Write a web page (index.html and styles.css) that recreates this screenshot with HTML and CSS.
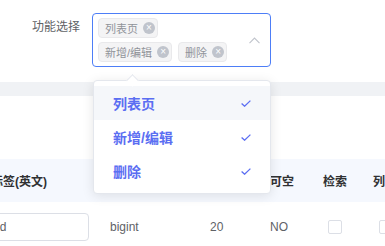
FILE: index.html
```html
<!DOCTYPE html>
<html lang="zh">
<head>
<meta charset="utf-8">
<link rel="stylesheet" href="styles.css">
</head>
<body>
<div class="page">
  <div class="form-row">
    <label class="form-label">功能选择</label>
    <div class="select is-focus">
      <div class="tags">
        <span class="tag"><span class="tag-text">列表页</span><i class="tag-close">×</i></span>
        <span class="tag"><span class="tag-text">新增/编辑</span><i class="tag-close">×</i></span>
        <span class="tag"><span class="tag-text">删除</span><i class="tag-close">×</i></span>
      </div>
      <svg class="arrow" width="11" height="7" viewBox="0 0 11 7"><polyline points="0.5,6.2 5.5,1 10.5,6.2" fill="none" stroke="#c0c4cc" stroke-width="1.1"/></svg>
    </div>
  </div>
  <div class="band"></div>
  <div class="table">
    <div class="thead">
      <div class="th th-first">标签(英文)</div>
      <div class="th">类型</div>
      <div class="th">长度</div>
      <div class="th">可空</div>
      <div class="th">检索</div>
      <div class="th">列表</div>
    </div>
    <div class="trow">
      <div class="td"><div class="input">id</div></div>
      <div class="td">bigint</div>
      <div class="td">20</div>
      <div class="td">NO</div>
      <div class="td"><span class="checkbox cb5"></span></div>
      <div class="td"><span class="checkbox cb6"></span></div>
    </div>
  </div>

  <div class="dropdown">
    <span class="dropdown-arrow"></span>
    <ul class="options">
      <li class="option hover"><span>列表页</span><svg class="check" width="10" height="7" viewBox="0 0 10 7"><polyline points="0.6,3.4 3.6,6.2 9.4,0.6" fill="none" stroke="#5b6ef2" stroke-width="1.3"/></svg></li>
      <li class="option"><span>新增/编辑</span><svg class="check" width="10" height="7" viewBox="0 0 10 7"><polyline points="0.6,3.4 3.6,6.2 9.4,0.6" fill="none" stroke="#5b6ef2" stroke-width="1.3"/></svg></li>
      <li class="option"><span>删除</span><svg class="check" width="10" height="7" viewBox="0 0 10 7"><polyline points="0.6,3.4 3.6,6.2 9.4,0.6" fill="none" stroke="#5b6ef2" stroke-width="1.3"/></svg></li>
    </ul>
  </div>
</div>
</body>
</html>
```

FILE: styles.css
```css
html, body {
  margin: 0;
  padding: 0;
  overflow: hidden;
  background: #fff;
}
body {
  font-family: "Liberation Sans", "Noto Sans CJK SC", sans-serif;
  font-size: 12px;
  color: #606266;
}
.page {
  position: relative;
  width: 385px;
  height: 246px;
}
.form-row {
  display: flex;
  padding-top: 13px;
}
.form-label {
  width: 92px;
  box-sizing: border-box;
  padding-right: 12px;
  text-align: right;
  line-height: 28px;
  font-size: 12px;
  color: #606266;
}
.select {
  width: 179px;
  height: 54px;
  box-sizing: border-box;
  border: 1px solid #4d7ef7;
  border-radius: 4px;
  padding: 4px 10px 4px 5px;
  display: flex;
  align-items: center;
}
.tags {
  flex: 1;
  display: flex;
  flex-wrap: wrap;
  column-gap: 6px;
  row-gap: 4px;
  align-content: flex-start;
  height: 100%;
}
.tag {
  display: inline-flex;
  align-items: center;
  height: 20px;
  box-sizing: border-box;
  padding: 0 2px 0 6px;
  background: #f4f4f5;
  border: 1px solid #e9e9eb;
  border-radius: 4px;
  color: #909399;
  font-size: 11px;
}
.tag-close {
  display: inline-flex;
  align-items: center;
  justify-content: center;
  width: 12px;
  height: 12px;
  margin-left: 5px;
  border-radius: 50%;
  background: #c0c4cc;
  color: #fff;
  font-style: normal;
  font-size: 10px;
  line-height: 1;
}
.arrow {
  margin-left: 14px;
  display: block;
}
.band {
  margin-top: 15px;
  height: 14px;
  background: #f0f2f5;
}
.table {
  margin-top: 63px;
  margin-left: -21px;
}
.thead, .trow {
  display: grid;
  grid-template-columns: 120px 100px 60px 53px 50px 60px;
}
.thead {
  height: 43px;
  background: #f5f8fe;
}
.th {
  display: flex;
  align-items: center;
  padding-left: 11px;
  font-size: 12px;
  font-weight: bold;
  color: #303133;
  white-space: nowrap;
}
.th-first {
  padding-left: 12px;
}
.trow {
  height: 50px;
}
.td {
  display: flex;
  align-items: center;
  padding-left: 11px;
  white-space: nowrap;
}
.td:first-child {
  padding-left: 6px;
}
.input {
  width: 104px;
  height: 28px;
  box-sizing: border-box;
  border: 1px solid #dcdfe6;
  border-radius: 4px;
  padding-left: 11px;
  line-height: 26px;
  color: #606266;
}
.checkbox {
  display: block;
  width: 14px;
  height: 14px;
  box-sizing: border-box;
  border: 1px solid #dcdfe6;
  border-radius: 2px;
  background: #fff;
}
.cb5 { margin-left: 5px; }
.cb6 { margin-left: 6px; }
.dropdown {
  position: absolute;
  top: 80px;
  left: 93px;
  width: 178px;
  box-sizing: border-box;
  background: #fff;
  border: 1px solid #e4e7ed;
  border-radius: 4px;
  box-shadow: 0 2px 12px rgba(0, 0, 0, 0.1);
}
.dropdown-arrow {
  position: absolute;
  top: -5px;
  left: 34px;
  width: 8px;
  height: 8px;
  background: #fff;
  border-top: 1px solid #e4e7ed;
  border-left: 1px solid #e4e7ed;
  transform: rotate(45deg);
}
.options {
  list-style: none;
  margin: 0;
  padding: 5px 0;
}
.option {
  display: flex;
  align-items: center;
  justify-content: space-between;
  height: 34px;
  padding: 0 19px;
  font-size: 14px;
  font-weight: bold;
  color: #5b6ef2;
}
.option.hover {
  background: #f5f7fa;
}
.check {
  display: block;
}
```
